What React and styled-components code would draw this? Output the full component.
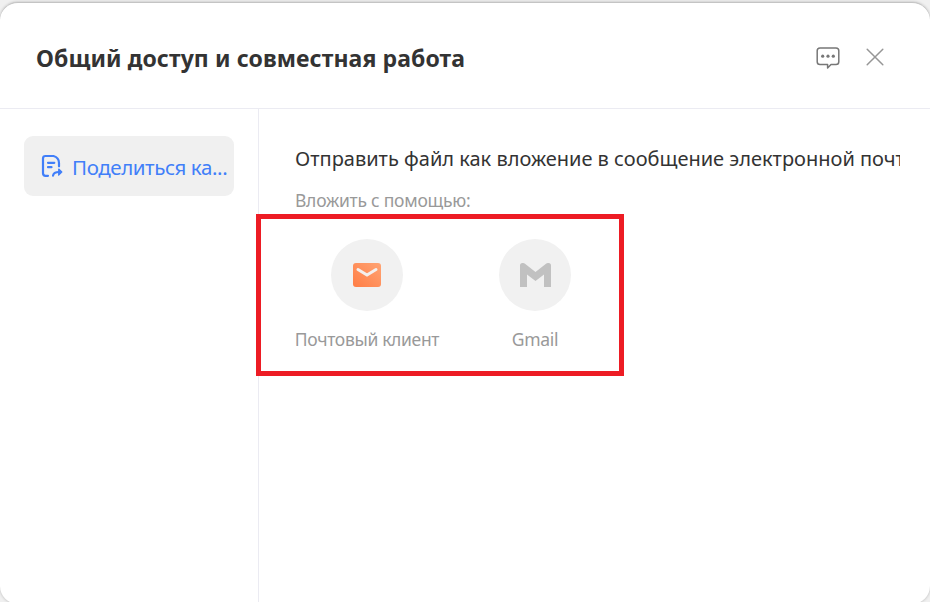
import React from 'react';
import styled, { createGlobalStyle } from 'styled-components';

const GlobalStyle = createGlobalStyle`
    * {
        box-sizing: border-box;
    }

    body {
        margin: 0;
        height: 602px;
        overflow: hidden;
        background: #f0f0f0;
        font-family: 'Noto Sans', 'Open Sans', sans-serif;
    }
`;

const Dialog = styled.div`
    display: flex;
    flex-direction: column;
    width: 930px;
    height: 602px;
    margin-top: 2px;
    border-top: 1px solid #c4c4c4;
    border-radius: 18px;
    background: #fff;
    box-shadow: 0 0 3px rgba(0, 0, 0, 0.25);
    overflow: hidden;
`;

const Header = styled.header`
    display: flex;
    align-items: center;
    height: 106px;
    flex: none;
    padding: 4px 45px 0 36px;
    border-bottom: 1px solid #ebebf2;
`;

const Title = styled.h1`
    flex: 1;
    margin: 0;
    font-size: 23px;
    line-height: 32px;
    font-weight: 700;
    letter-spacing: 0.09px;
    color: #333;
    white-space: nowrap;
`;

const IconButton = styled.button`
    display: flex;
    margin: ${props => props.$raised ? '0 0 1px 25px' : '1px 0 0 25px'};
    padding: 0;
    border: 0;
    background: none;
`;

const Body = styled.div`
    display: flex;
    flex: 1;
`;

const Sidebar = styled.nav`
    width: 259px;
    padding: 27px 24px;
    border-right: 1px solid #ebebf2;
`;

const SidebarItem = styled.div`
    display: flex;
    align-items: center;
    width: 210px;
    height: 60px;
    padding-left: 16px;
    border-radius: 9px;
    background: #f0f0f0;
    color: #417ff9;
`;

const Label = styled.span`
    margin: 1px 0 0 8px;
    font-size: 20.5px;
    line-height: 28px;
    letter-spacing: -0.4px;
    white-space: nowrap;
`;

const Content = styled.main`
    flex: 1;
    min-width: 0;
    padding: 35px 30px 0 36px;
`;

const Heading = styled.h2`
    margin: 0;
    font-size: 20px;
    line-height: 30px;
    font-weight: 400;
    color: #333;
    white-space: nowrap;
    overflow: hidden;
`;

const Hint = styled.p`
    margin: 14px 0 0;
    font-size: 17.5px;
    line-height: 24px;
    letter-spacing: -0.25px;
    color: #999;
`;

const Targets = styled.section`
    display: flex;
    width: 368px;
    height: 162px;
    margin: 2px 0 0 -39px;
    padding: 20px 0 0 22px;
    border: 5px solid #ed1c24;
    position: relative;
`;

const Target = styled.div`
    display: flex;
    flex: none;
    flex-direction: column;
    align-items: center;
    width: 168px;
`;

const Circle = styled.div`
    display: flex;
    align-items: center;
    justify-content: center;
    width: 72px;
    height: 72px;
    border-radius: 50%;
    background: #f1f1f1;
`;

const TargetName = styled.span`
    margin-top: 16px;
    font-size: 17.5px;
    line-height: 24px;
    letter-spacing: -0.33px;
    color: #999;
    white-space: nowrap;
`;

const FeedbackIcon = () => (
    <svg width='24' height='24' viewBox='0 0 24 24' fill='none'>
        <path
            d='M4 1.9H20Q22.8 1.9 22.8 4.7V15.7Q22.8 18.5 20 18.5H15L11.6 22V18.5H4Q1.2 18.5 1.2 15.7V4.7Q1.2 1.9 4 1.9Z'
            stroke='#777'
            strokeWidth='1.5'
            strokeLinejoin='round'/>
        <circle cx='6.7' cy='10.2' r='1.6' fill='#777'/>
        <circle cx='12' cy='10.2' r='1.6' fill='#777'/>
        <circle cx='17.3' cy='10.2' r='1.6' fill='#777'/>
    </svg>
);

const CloseIcon = () => (
    <svg width='20' height='20' viewBox='0 0 20 20'>
        <path d='M2.2 2.2L17.8 17.8M17.8 2.2L2.2 17.8' stroke='#969696' strokeWidth='1.5' strokeLinecap='round'/>
    </svg>
);

const ShareFileIcon = () => (
    <svg width='24' height='24' viewBox='0 0 24 24' fill='none' stroke='currentColor' strokeWidth='2.2' strokeLinecap='round'>
        <path d='M8 21.8H5.5Q3 21.8 3 19.3V4.5Q3 2 5.5 2H13.5Q19 3.5 19 9V12.3'/>
        <path d='M8 8.8H14.3M8 13.2H11.5'/>
        <path d='M13 21.6Q13.7 18 19 18'/>
        <path d='M18.7 15L21.8 18L18.7 21.2Z' fill='currentColor' strokeWidth='1.2' strokeLinejoin='round'/>
    </svg>
);

const MailIcon = () => (
    <svg width='28' height='24' viewBox='0 0 28 24' fill='none'>
        <defs>
            <linearGradient id='mail' x1='0' y1='1' x2='1' y2='0'>
                <stop offset='0' stopColor='#ff7d45'/>
                <stop offset='1' stopColor='#ffa474'/>
            </linearGradient>
        </defs>
        <rect width='28' height='24' rx='3' fill='url(#mail)'/>
        <path d='M5 6.5L14 12L23 6.5' stroke='#f4f0ee' strokeWidth='3' strokeLinecap='round'/>
    </svg>
);

const GmailIcon = () => (
    <svg width='31' height='24' viewBox='0 0 31 24' fill='#c1c1c1'>
        <path d='M0 24V2.5Q0 0 2.5 0H3.2Q4 0 4.7 .6L15.5 9L26.3 .6Q27 0 27.8 0H28.5Q31 0 31 2.5V24H24V11.4L15.5 18L7 11.4V24Z'/>
    </svg>
);

const targets = [
    { name: 'Почтовый клиент', icon: <MailIcon/> },
    { name: 'Gmail', icon: <GmailIcon/> }
];

class App extends React.Component {
    render() {
        return (
            <Dialog>
                <GlobalStyle/>
                <Header>
                    <Title>Общий доступ и совместная работа</Title>
                    <IconButton><FeedbackIcon/></IconButton>
                    <IconButton $raised><CloseIcon/></IconButton>
                </Header>
                <Body>
                    <Sidebar>
                        <SidebarItem>
                            <ShareFileIcon/>
                            <Label>Поделиться ка...</Label>
                        </SidebarItem>
                    </Sidebar>
                    <Content>
                        <Heading>Отправить файл как вложение в сообщение электронной почты</Heading>
                        <Hint>Вложить с помощью:</Hint>
                        <Targets>
                            {targets.map(target => (
                                <Target key={target.name}>
                                    <Circle>{target.icon}</Circle>
                                    <TargetName>{target.name}</TargetName>
                                </Target>
                            ))}
                        </Targets>
                    </Content>
                </Body>
            </Dialog>
        );
    }
}

export default App;
